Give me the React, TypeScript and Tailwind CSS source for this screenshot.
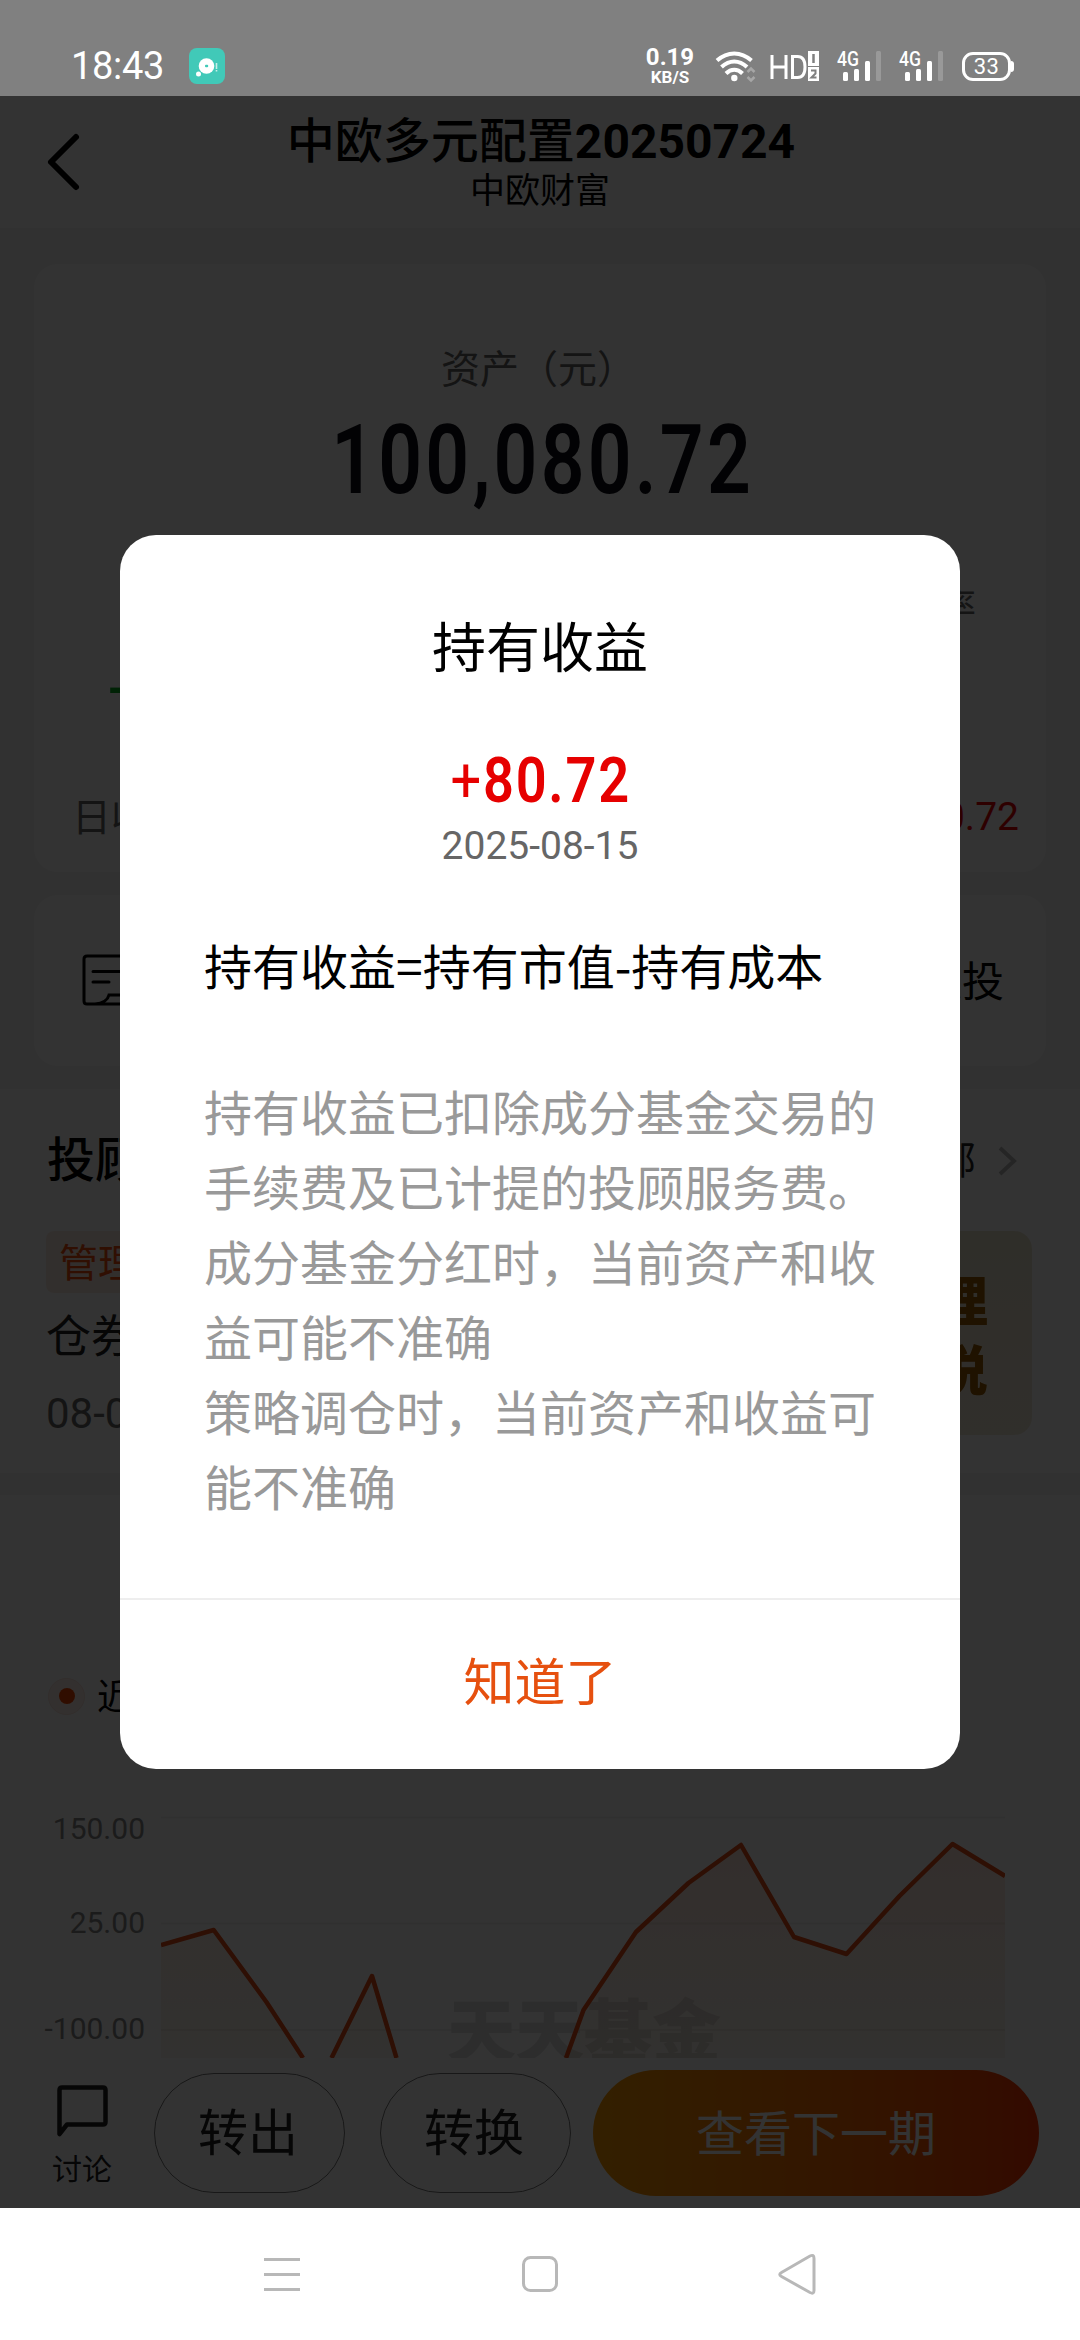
import type { ReactNode } from 'react';

const PAGE_BG = '#f5f5f5';

const CHART_LINE =
  'M0 129 L52.7 114 L105.4 186 L142 242 M170.500 242 L211 160 L235.500 242 M405 242 L422.5 194 L475 116 L527.5 67 L580 29 L633 121 L685.5 138 L738.5 80 L791.5 28 L844 60';
const CHART_AREA =
  'M0 129 L52.7 114 L105.4 186 L142 242 H0Z M170.500 242 L211 160 L235.500 242Z M405 242 L422.5 194 L475 116 L527.5 67 L580 29 L633 121 L685.5 138 L738.5 80 L791.5 28 L844 60V242Z';

const AXIS_LABELS = ['150.00', '25.00', '-100.00'];

const NOTES = [
  '持有收益已扣除成分基金交易的手续费及已计提的投顾服务费。',
  '成分基金分红时，当前资产和收益可能不准确',
  '策略调仓时，当前资产和收益可能不准确',
];

function Signal() {
  return (
    <svg className="overflow-visible" width="46" height="32" viewBox="0 0 46 32" fill="#fff">
      <text x="0" y="15.5" fontSize="20" fontWeight="500" textLength="22" lengthAdjust="spacingAndGlyphs">
        4G
      </text>
      <rect x="6" y="22" width="5" height="9" rx="1.5" />
      <rect x="17" y="19" width="5" height="12" rx="1.5" />
      <rect x="28" y="11" width="5" height="20" rx="1.5" />
      <rect x="39" y="1" width="5" height="30" rx="1.5" opacity="0.2" />
    </svg>
  );
}

function StatusBar() {
  return (
    <div className="flex h-24 shrink-0 items-start bg-[#808080] text-white">
      <div className="ml-[71px] mt-[44px] w-[95px] text-[38px] leading-[44px] tracking-[-0.3px]">18:43</div>
      <svg className="ml-[23px] mt-12" width="36" height="36" viewBox="0 0 36 36">
        <rect width="36" height="36" rx="8" fill="#41c9b8" />
        <circle cx="17.5" cy="18" r="7.8" fill="#fff" />
        <circle cx="9.5" cy="26" r="2.5" fill="#fff" />
        <rect x="16" y="16.8" width="3.2" height="2.400" rx="1" fill="#41c9b8" />
        <path d="M27.5 15v6M27.5 22v1.6" stroke="#fff" strokeWidth="1.6" opacity="0.7" />
      </svg>
      <div className="ml-[417px] mt-[45px] flex w-[56px] flex-col items-center font-bold">
        <span className="text-[24px] leading-[25px]">0.19</span>
        <span className="text-[17px] leading-[15px]">KB/S</span>
      </div>
      <svg className="ml-[17px] mt-[50px]" width="42" height="34" viewBox="0 0 42 34" fill="none" stroke="#fff" strokeWidth="4">
        <path d="M2 10.500C12.500 1 26 1 36.500 10.500" />
        <path d="M6.500 17C14.500 9.500 24 9.500 32 17" />
        <path d="M11 23.500C16 18.500 22.500 18.500 27.500 23.500" />
        <circle cx="19.300" cy="28" r="3.200" fill="#fff" stroke="none" />
        <path d="M32.500 22l3.500-3.500 3.500 3.500M32.500 27l3.500 3.500 3.500-3.500" stroke="#a6a6a6" strokeWidth="2.500" />
      </svg>
      <svg className="ml-[13px] mt-[50px]" width="50" height="33" viewBox="0 0 50 33">
        <path d="M2 5v24M16 5v24M2 17h14" fill="none" stroke="#fff" strokeWidth="3" />
        <path d="M22.500 6.500v21h5c5 0 7.500-4 7.500-10.500s-2.500-10.500-7.500-10.500z" fill="none" stroke="#fff" strokeWidth="3" />
        <rect x="38" y="1" width="11" height="15" fill="#fff" />
        <rect x="38" y="17" width="11" height="14" fill="#fff" />
        <path d="M43.500 4v9" stroke="#808080" strokeWidth="2.500" />
        <path d="M41 20.500h4.500v3l-4 4h5" fill="none" stroke="#808080" strokeWidth="2" />
      </svg>
      <div className="ml-[17px] mt-[50px] flex gap-4">
        <Signal />
        <Signal />
      </div>
      <div className="ml-[17px] mt-[52px] flex items-center">
        <div className="flex h-[29px] w-[49px] items-center justify-center rounded-[11px] border-[3px] border-white text-[22px] leading-none tracking-[0.500px]">
          33
        </div>
        <div className="h-[11px] w-[3px] rounded-r-sm bg-white" />
      </div>
    </div>
  );
}

function Header() {
  return (
    <div className="relative flex h-[132px] shrink-0 flex-col items-center bg-white text-black">
      <svg className="absolute left-[46px] top-[36px]" width="36" height="60" viewBox="0 0 36 60" fill="none" stroke="#000" strokeWidth="6" strokeLinecap="round" strokeLinejoin="round">
        <path d="M30 5L5 30l25 25" />
      </svg>
      <div className="mt-[16px] pl-[2px] text-[48px] font-bold leading-[60px]">
        <span className="font-medium">中欧多元配置</span>20250724
      </div>
      <div className="text-[35px] leading-[40px]">中欧财富</div>
    </div>
  );
}

function AssetCard() {
  return (
    <div className="mx-[34px] mt-9 flex h-[608px] shrink-0 flex-col overflow-hidden rounded-[24px] bg-white">
      <div className="mt-[81px] pr-[3px] text-center text-[39px] leading-[50px] text-[#666]">资产（元）</div>
      <div className="mt-[17px] flex h-[96px] justify-center">
        <span className="scale-x-[0.8] pl-[7px] text-[96px] font-semibold leading-[96px] tracking-[4px] text-[#0c0c14]">
          100,080.72
        </span>
      </div>
      <div className="mt-[77px] flex justify-between pl-[74px] pr-[70px] text-[36px] leading-[44px] text-[#666]">
        <span className="pl-[40px]">日收益</span>
        <span>持有收益率</span>
      </div>
      <div className="mt-[30px] pl-[74px] text-[57px] font-medium leading-[60px] text-[#00a81c]">-</div>
      <div className="mt-auto flex h-[112px] items-center justify-between bg-[#fcfcfc] pl-[38px] pr-[27px] text-[39px]">
        <span className="pt-[4px] text-[#666]">日收益</span>
        <span className="pt-[3px] text-[#e60000]">+80.72</span>
      </div>
    </div>
  );
}

function ActionCard() {
  return (
    <div className="mx-[34px] mt-[23px] flex h-[171px] shrink-0 items-center justify-between rounded-[24px] bg-white pl-[47px] pr-[42px] text-[42px] text-black">
      <svg width="60" height="54" viewBox="0 0 60 54" fill="none" stroke="#000" strokeWidth="3" strokeLinecap="round">
        <path d="M58 2H6Q3 2 3 5v42q0 3 3 3h52M12 17.500h27M12 28h16M14 50q12-1 14-9h30" />
      </svg>
      <span className="pt-[4px]">定投</span>
    </div>
  );
}

function AdviserSection() {
  return (
    <div className="mt-[23px] flex h-[384px] shrink-0 flex-col bg-white">
      <div className="mt-[42px] flex h-[60px] items-center justify-between pl-[47px] pr-[62px]">
        <span className="text-[48px] font-medium text-black">投顾</span>
        <span className="flex items-center gap-[22px] text-[39px] text-[#222]">
          全部
          <svg width="20" height="30" viewBox="0 0 20 30" fill="none" stroke="#bbb" strokeWidth="4">
            <path d="M2 2l14 13L2 28" />
          </svg>
        </span>
      </div>
      <div className="mt-[40px] flex justify-between pl-[46px] pr-12">
        <div className="flex flex-col">
          <span className="flex h-[62px] items-center rounded-lg bg-[#fbece2] px-[13px] pt-[4px] text-[39px] text-[#f04a0c]">管理</span>
          <span className="mt-[15px] text-[45px] leading-[60px] text-[#222]">仓券</span>
          <span className="mt-[21px] text-[42px] leading-[50px] text-[#666]">08-0</span>
        </div>
        <div className="flex h-[204px] w-[300px] flex-col items-end rounded-[18px] bg-linear-to-b from-[#ebe4cd] to-[#f0e8d8] pr-[44px] pt-[38px] text-[54px] font-black leading-[69px] text-[#9a5a00]">
          <span>经理</span>
          <span>解说</span>
        </div>
      </div>
    </div>
  );
}

function ProfitChart() {
  return (
    <div className="mt-[22px] flex h-[563px] shrink-0 flex-col bg-white">
      <div className="mt-[179px] flex h-11 items-center pl-12 text-[36px] text-black">
        <span className="mr-[12px] flex size-[37px] items-center justify-center rounded-full border border-[#f7e2da] bg-[#fff1ec]">
          <span className="size-[16px] rounded-full bg-[#f04400]" />
        </span>
        <span className="pt-[3px]">近</span>
      </div>
      <div className="mt-[94px] flex">
        <div className="flex w-[145px] flex-col text-right text-[30px] leading-[30px] text-[#888]">
          <span className="mt-[2px]">{AXIS_LABELS[0]}</span>
          <span className="mt-[64px]">{AXIS_LABELS[1]}</span>
          <span className="mt-[76px]">{AXIS_LABELS[2]}</span>
        </div>
        <svg className="ml-4 mt-1" width="844" height="242" viewBox="0 0 844 242">
          <defs>
            <linearGradient id="profitFill" x1="0" y1="28" x2="0" y2="246" gradientUnits="userSpaceOnUse">
              <stop offset="0" stopColor="#f04400" stopOpacity="0.14" />
              <stop offset="1" stopColor="#d09040" stopOpacity="0.09" />
            </linearGradient>
          </defs>
          <path d="M0 1.500h844M0 107.500h844M0 214h844" stroke="#efefef" strokeWidth="2" />
          <text x="286" y="241" fontSize="69" fontWeight="800" fill="#e2e2e2" textLength="274">
            天天基金
          </text>
          <path d={CHART_AREA} fill="url(#profitFill)" />
          <path d={CHART_LINE} fill="none" stroke="#e34a14" strokeWidth="4.500" strokeLinejoin="round" />
        </svg>
      </div>
    </div>
  );
}

function OutlineButton({ children }: { children: ReactNode }) {
  return (
    <button className="h-[120px] w-[191px] rounded-full border-[1.500px] border-[#777] pr-[3px] pt-[3px] text-[50px] text-[#222]">
      {children}
    </button>
  );
}

function BottomBar() {
  return (
    <div className="flex h-[150px] shrink-0 items-center bg-white pr-[41px]">
      <div className="ml-[44px] flex w-[76px] flex-col items-center pt-[6px] text-[#222]">
        <svg width="53" height="53" viewBox="0 0 53 53" fill="none" stroke="#222" strokeWidth="4.500" strokeLinejoin="round">
          <path d="M3.500 50V6Q3.500 3.500 6 3.500h41q2.500 0 2.500 2.500v32q0 2.500-2.500 2.500H11z" />
        </svg>
        <span className="mt-[15px] text-[30px] leading-[36px]">讨论</span>
      </div>
      <div className="ml-[34px] flex gap-[35px]">
        <OutlineButton>转出</OutlineButton>
        <OutlineButton>转换</OutlineButton>
      </div>
      <button className="ml-auto h-[126px] w-[446px] rounded-full bg-linear-to-r from-[#ff9c00] to-[#ff3200] pt-[3px] text-[48px] text-white">
        查看下一期
      </button>
    </div>
  );
}

function ProfitDialog() {
  return (
    <div className="absolute inset-0 flex items-center justify-center bg-black/80">
      <div className="flex h-[1234px] w-[840px] flex-col rounded-[36px] bg-white">
        <div className="mt-[85px] text-center text-[54px] leading-[60px] text-black">持有收益</div>
        <div className="mt-[68px] flex h-[66px] justify-center text-[#e60000]">
          <span className="scale-x-[0.86] pl-[2px] text-[63px] font-semibold leading-[66px] tracking-[2px]">
            <span className="font-normal">+</span>80.72
          </span>
        </div>
        <div className="mt-[7px] text-center text-[39px] leading-[50px] text-[#666]">2025-08-15</div>
        <div className="mt-[63px] px-[84px] font-['Noto_Sans_CJK_SC',sans-serif] text-[48px] leading-[60px] text-black">
          持有收益=持有市值-持有成本
        </div>
        <div className="mt-[83px] px-[84px] text-[48px] leading-[75px] text-[#999]">
          {NOTES.map((note) => (
            <p key={note}>{note}</p>
          ))}
        </div>
        <button className="mt-auto h-[171px] rounded-b-[36px] border-t-2 border-[#eee] text-[51px] text-[#e6500f]">
          知道了
        </button>
      </div>
    </div>
  );
}

function NavBar() {
  return (
    <div className="flex h-[132px] shrink-0 items-center justify-center gap-[216px] bg-white">
      <svg width="42" height="42" viewBox="0 0 42 42" stroke="#b8b8b8" strokeWidth="3">
        <path d="M3 6.500h36M3 21.500h36M3 36.500h36" />
      </svg>
      <svg width="42" height="42" viewBox="0 0 42 42" fill="none" stroke="#b8b8b8" strokeWidth="3">
        <rect x="4.500" y="4.500" width="33" height="33" rx="7" />
      </svg>
      <svg width="42" height="42" viewBox="0 0 42 42" fill="none" stroke="#b8b8b8" strokeWidth="3">
        <path d="M33 3Q37 1 37 5.500v32Q37 41.500 33 39.500L4.500 23.500Q1 21.500 4.500 19.500z" />
      </svg>
    </div>
  );
}

export default function App() {
  return (
    <div className="flex h-[2340px] w-[1080px] flex-col overflow-hidden bg-white font-[Roboto,'Noto_Sans_CJK_SC',sans-serif]">
      <StatusBar />
      <div className="relative flex h-[2112px] shrink-0 flex-col overflow-hidden" style={{ background: PAGE_BG }}>
        <Header />
        <AssetCard />
        <ActionCard />
        <AdviserSection />
        <ProfitChart />
        <BottomBar />
        <ProfitDialog />
      </div>
      <NavBar />
    </div>
  );
}
